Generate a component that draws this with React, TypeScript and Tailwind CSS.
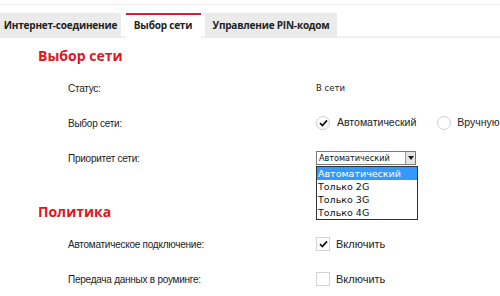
import React from "react";

const tabs = [
  { label: "Интернет-соединение", active: false, w: "w-[121px]" },
  { label: "Выбор сети", active: true, w: "w-[75px]" },
  { label: "Управление PIN-кодом", active: false, w: "w-[132px]" },
];

const labelFont = { fontFamily: '"Liberation Sans", Arial, sans-serif' };
const valueFont = { fontFamily: '"DejaVu Sans", Verdana, sans-serif' };
const condFont = { fontFamily: '"DejaVu Sans Condensed", "DejaVu Sans", Verdana, sans-serif' };

function Row({ label, children }: { label: string; children: React.ReactNode }) {
  return (
    <div className="flex h-[35px] items-center pl-[68px]">
      <div className="w-[248px] text-[10px] tracking-[-0.25px] text-[#222]" style={labelFont}>
        {label}
      </div>
      <div className="relative flex items-center">{children}</div>
    </div>
  );
}

function Heading({ children }: { children: React.ReactNode }) {
  return (
    <div
      className="mb-[3.5px] flex h-[24px] items-center pl-[38px] text-[14px] font-bold text-[#e2141f]"
      style={{ fontFamily: '"Open Sans", sans-serif' }}
    >
      {children}
    </div>
  );
}

function CheckMark() {
  return (
    <svg width="9" height="8" viewBox="0 0 9 8">
      <path d="M1 4.2 L3.4 6.6 L8 1.4" fill="none" stroke="#111" strokeWidth="1.7" />
    </svg>
  );
}

function Checkbox({ checked }: { checked: boolean }) {
  return (
    <div className="flex h-[14px] w-[14px] items-center justify-center border border-[#d4d4d4] bg-white">
      {checked && <CheckMark />}
    </div>
  );
}

function Radio({ checked }: { checked: boolean }) {
  return (
    <div className="flex h-[14px] w-[14px] items-center justify-center rounded-full border border-[#cfcfcf] bg-white">
      {checked && <CheckMark />}
    </div>
  );
}

export default function App() {
  return (
    <div className="h-[296px] w-[500px] overflow-hidden bg-white">
      <div className="h-[4px]" />
      <div className="h-px bg-[#ececec]" />
      <div className="mt-[8px] flex h-[25px] gap-[4.5px] border-b-2 border-[#f1f1f1]">
        {tabs.map((t) => (
          <div
            key={t.label}
            className={`-mb-[2px] flex items-center justify-center text-[10px] font-bold tracking-[-0.2px] text-[#222] ${t.w} ${
              t.active ? "border-t-2 border-[#d8202c] bg-white pb-[2px]" : "bg-[#ebebeb]"
            }`}
            style={{ fontFamily: '"Open Sans", sans-serif' }}
          >
            {t.label}
          </div>
        ))}
      </div>

      <div className="mt-[5px]">
        <Heading>Выбор сети</Heading>
        <Row label="Статус:">
          <span className="text-[8.5px] text-[#222]" style={valueFont}>
            В сети
          </span>
        </Row>
        <Row label="Выбор сети:">
          <div className="flex items-center gap-[7px]">
            <Radio checked />
            <span className="text-[10.5px] text-[#222]" style={labelFont}>
              Автоматический
            </span>
          </div>
          <div className="ml-[21px] flex items-center gap-[6px]">
            <Radio checked={false} />
            <span className="text-[10.5px] text-[#222]" style={labelFont}>
              Вручную
            </span>
          </div>
        </Row>
        <Row label="Приоритет сети:">
          <div
            className="flex h-[14px] w-[100px] items-center border border-[#7a7a7a] bg-white text-[9px] text-[#111]"
            style={condFont}
          >
            <span className="flex-1 whitespace-nowrap pl-[2px] leading-none">Автоматический</span>
            <div className="flex h-full w-[10px] items-center justify-center border-l border-[#9a9a9a] bg-[#e4e4e4]">
              <svg width="6" height="4" viewBox="0 0 6 4">
                <path d="M0 0 H6 L3 4 Z" fill="#222" />
              </svg>
            </div>
          </div>
          <div
            className="absolute left-0 top-[15px] z-10 w-[102px] border border-[#333] bg-white text-[9.5px] text-[#111]"
            style={valueFont}
          >
            <div className="h-[13px] bg-[#3399ff] pl-px leading-[13px] text-white">Автоматический</div>
            <div className="h-[13px] pl-px leading-[13px]">Только 2G</div>
            <div className="h-[13px] pl-px leading-[13px]">Только 3G</div>
            <div className="h-[13px] pl-px leading-[13px]">Только 4G</div>
          </div>
        </Row>
      </div>

      <div className="mt-[23.5px]">
        <Heading>Политика</Heading>
        <Row label="Автоматическое подключение:">
          <div className="flex items-center gap-[6px]">
            <Checkbox checked />
            <span className="text-[11px] text-[#222]" style={labelFont}>
              Включить
            </span>
          </div>
        </Row>
        <Row label="Передача данных в роуминге:">
          <div className="flex items-center gap-[6px]">
            <Checkbox checked={false} />
            <span className="text-[11px] text-[#222]" style={labelFont}>
              Включить
            </span>
          </div>
        </Row>
      </div>
    </div>
  );
}
